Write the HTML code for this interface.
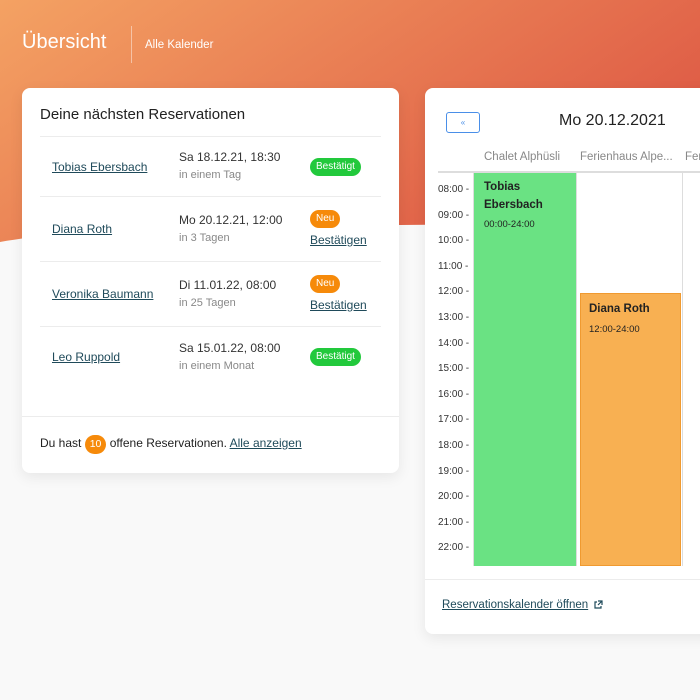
<!DOCTYPE html>
<html><head><meta charset="utf-8"><style>
*{margin:0;padding:0;box-sizing:border-box}
body{width:700px;height:700px;overflow:hidden;background:#f9f9f9;font-family:"Liberation Sans",sans-serif;color:#222;position:relative}
.a{position:absolute;white-space:nowrap}
.card{position:absolute;background:#fff;border-radius:8px;box-shadow:0 4px 14px rgba(0,0,0,.08)}
.hr{position:absolute;height:1px;background:#ececec}
.lnk{color:#1f4a5a;text-decoration:underline;font-size:12px}
.d1{font-size:12px;color:#333}
.d2{font-size:11px;color:#888}
.badge{position:absolute;border-radius:10px;color:#fff;font-size:10px;padding:0 6px;height:18px;line-height:18px}
.g{background:#22c93c}.o{background:#f68a0a}
.t{font-size:10px;color:#333}
</style></head><body>
<svg class="a" style="left:0;top:0" width="700" height="260" viewBox="0 0 700 260">
<defs><linearGradient id="gr" x1="0" y1="0" x2="1" y2="0.5"><stop offset="0" stop-color="#f4a263"/><stop offset="1" stop-color="#de5a45"/></linearGradient></defs>
<path d="M0 0H700V200 C600 215 500 225 400 225 C250 225 100 225 0 242Z" fill="url(#gr)"/>
</svg>
<div class="a" style="left:22px;top:31px;font-size:20px;color:#fff">Übersicht</div>
<div class="a" style="left:131px;top:26px;width:1px;height:37px;background:rgba(255,255,255,.45)"></div>
<div class="a" style="left:145px;top:39px;font-size:11.5px;color:#fff">Alle Kalender</div>

<div class="card" style="left:22px;top:88px;width:377px;height:385px">
<div class="a" style="left:18px;top:18px;font-size:15px;color:#222">Deine nächsten Reservationen</div>
<div class="hr" style="left:18px;right:18px;top:48px"></div>
<div class="a lnk" style="left:30px;top:72px">Tobias Ebersbach</div>
<div class="a d1" style="left:157px;top:62px">Sa 18.12.21, 18:30</div>
<div class="a d2" style="left:157px;top:81px">in einem Tag</div>
<div class="badge g" style="left:288px;top:70px">Bestätigt</div>
<div class="hr" style="left:18px;right:18px;top:108px"></div>
<div class="a lnk" style="left:30px;top:134px">Diana Roth</div>
<div class="a d1" style="left:157px;top:125px">Mo 20.12.21, 12:00</div>
<div class="a d2" style="left:157px;top:144px">in 3 Tagen</div>
<div class="badge o" style="left:288px;top:122px">Neu</div>
<div class="a lnk" style="left:288px;top:145px">Bestätigen</div>
<div class="hr" style="left:18px;right:18px;top:173px"></div>
<div class="a lnk" style="left:30px;top:199px">Veronika Baumann</div>
<div class="a d1" style="left:157px;top:190px">Di 11.01.22, 08:00</div>
<div class="a d2" style="left:157px;top:209px">in 25 Tagen</div>
<div class="badge o" style="left:288px;top:187px">Neu</div>
<div class="a lnk" style="left:288px;top:210px">Bestätigen</div>
<div class="hr" style="left:18px;right:18px;top:238px"></div>
<div class="a lnk" style="left:30px;top:262px">Leo Ruppold</div>
<div class="a d1" style="left:157px;top:253px">Sa 15.01.22, 08:00</div>
<div class="a d2" style="left:157px;top:272px">in einem Monat</div>
<div class="badge g" style="left:288px;top:260px">Bestätigt</div>
<div class="hr" style="left:0;right:0;top:328px"></div>
<div class="a" style="left:18px;top:347px;font-size:12px">Du hast <span style="display:inline-block;background:#f68a0a;color:#fff;border-radius:10px;padding:0 5px;height:19px;line-height:19px;font-size:10.5px">10</span> offene Reservationen. <span class="lnk">Alle anzeigen</span></div>
</div>

<div class="card" style="left:425px;top:88px;width:300px;height:546px">
<div class="a" style="left:21px;top:24px;width:34px;height:21px;border:1px solid #4a8fe8;border-radius:3px;color:#4a8fe8;font-size:8px;text-align:center;line-height:19px">«</div>
<div class="a" style="left:134px;top:24px;font-size:16px;color:#222">Mo 20.12.2021</div>
<div class="a" style="left:59px;top:63px;font-size:11.5px;color:#888">Chalet Alphüsli</div>
<div class="a" style="left:155px;top:63px;font-size:11.5px;color:#888">Ferienhaus Alpe...</div>
<div class="a" style="left:260px;top:63px;font-size:11.5px;color:#888">Fer</div>
<div class="hr" style="left:13px;right:0;top:83px;height:2px;background:#ddd"></div>
<div class="a" style="left:48px;top:85px;width:1px;height:393px;background:#ddd"></div>
<div class="a" style="left:151px;top:85px;width:1px;height:393px;background:#ddd"></div>
<div class="a" style="left:257px;top:85px;width:1px;height:393px;background:#ddd"></div>
<div class="a" style="left:49px;top:85px;width:102px;height:393px;background:#6ae283"></div>
<div class="a" style="left:155px;top:205px;width:101px;height:273px;background:#f8b052;border:1px solid #f09a30"></div>
<div class="a" style="left:59px;top:90px;font-size:11.5px;font-weight:bold;line-height:18px;white-space:normal;width:80px">Tobias Ebersbach</div>
<div class="a" style="left:59px;top:131px;font-size:9.5px">00:00-24:00</div>
<div class="a" style="left:164px;top:215px;font-size:11.5px;font-weight:bold">Diana Roth</div>
<div class="a" style="left:164px;top:236px;font-size:9.5px">12:00-24:00</div>
<div class="a t" style="left:13px;top:89px;line-height:25.6px">08:00 -<br>09:00 -<br>10:00 -<br>11:00 -<br>12:00 -<br>13:00 -<br>14:00 -<br>15:00 -<br>16:00 -<br>17:00 -<br>18:00 -<br>19:00 -<br>20:00 -<br>21:00 -<br>22:00 -</div>
<div class="hr" style="left:0;right:0;top:491px"></div>
<div class="a lnk" style="left:17px;top:511px;font-size:11.5px">Reservationskalender öffnen</div>
<svg class="a" style="left:168px;top:512px" width="10" height="10" viewBox="0 0 10 10"><path d="M4 2H2V8H8V6M5 1H9V5M9 1L5 5" fill="none" stroke="#1f4a5a" stroke-width="1.2"/></svg>
</div>
</body></html>
